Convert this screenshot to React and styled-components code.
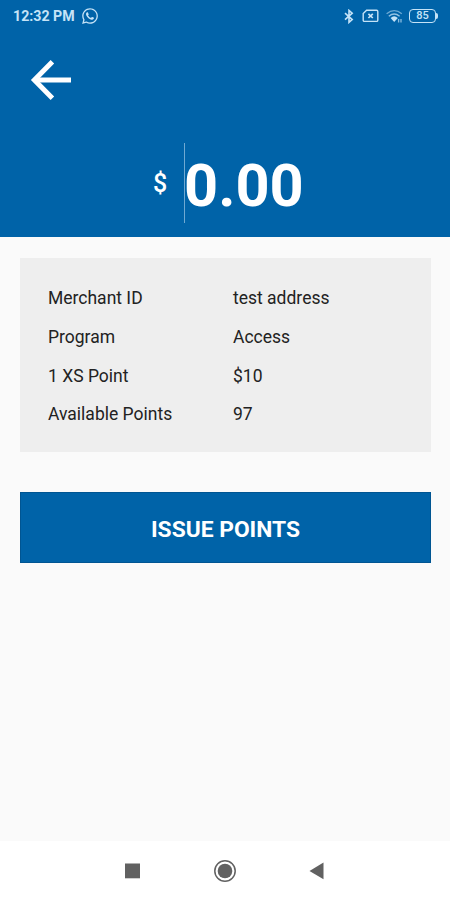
import styled, { createGlobalStyle } from "styled-components"
import { FaWhatsapp } from 'react-icons/fa'

const GlobalStyle = createGlobalStyle`
  * {
    box-sizing: border-box;
  }

  body {
    margin: 0;
    background-color: #fafafa;
    font-family: Roboto, "Liberation Sans", sans-serif;
  }
`

const details = [
  {
    "label": 'Merchant ID',
    "value": 'test address'
  },
  {
    "label": 'Program',
    "value": 'Access'
  },
  {
    "label": '1 XS Point',
    "value": '$10'
  },
  {
    "label": 'Available Points',
    "value": '97'
  }
]

const BluetoothIcon = () => (
  <svg width="10" height="15" viewBox="0 0 10 15" fill="none" stroke="currentColor" strokeWidth="1.6">
    <path d="M1 4.2 L8.2 10.6 L5 13.4 V1.4 L8.2 4.2 L1 10.6" />
  </svg>
)

const NoSimIcon = () => (
  <svg width="17" height="14" viewBox="0 0 17 14" fill="none" stroke="currentColor" strokeWidth="1.4">
    <path d="M4.6 1.2 H14.6 Q15.8 1.2 15.8 2.4 V11.2 Q15.8 12.4 14.6 12.4 H2.4 Q1.2 12.4 1.2 11.2 V4.6 Z" />
    <path d="M6.4 4.8 L10.8 9 M10.8 4.8 L6.4 9" strokeWidth="1.7" />
  </svg>
)

const WifiIcon = () => (
  <svg width="17" height="14" viewBox="0 0 17 14" fill="none" stroke="currentColor">
    <path d="M0.6 4.8 Q8.2 -1.6 15.8 4.8" strokeWidth="1.3" opacity="0.55" />
    <path d="M2.8 7.2 Q8.2 2.6 13.6 7.2" strokeWidth="1.4" opacity="0.75" />
    <path d="M4.6 8.9 Q8.2 5.6 11.8 8.9 L8.2 13 Z" fill="currentColor" stroke="none" />
    <path d="M12.6 10 V13.4 M15 10 V13.4" strokeWidth="1.3" opacity="0.7" />
  </svg>
)

const ArrowIcon = () => (
  <svg width="42" height="42" viewBox="0 0 42 42" fill="none" stroke="currentColor" strokeWidth="5">
    <path d="M41 21 H5" />
    <path d="M22.4 2.8 L4.4 21 L22.4 39.2" />
  </svg>
)

const App = () => {
  return (
    <Screen>
      <GlobalStyle />
      <Header>
        <StatusBar>
          <Clock>12:32 PM</Clock>
          <FaWhatsapp size={18} />
          <StatusIcons>
            <BluetoothIcon />
            <NoSimIcon />
            <WifiIcon />
            <Battery><BatteryLevel>85</BatteryLevel></Battery>
          </StatusIcons>
        </StatusBar>
        <BackButton aria-label="Back"><ArrowIcon /></BackButton>
        <Amount>
          <Currency>$</Currency>
          <AmountValue>0.00</AmountValue>
        </Amount>
      </Header>

      <Content>
        <Card>
          {details.map((item) => {
            return (
              <Row key={item.label}>
                <dt>{item.label}</dt>
                <dd>{item.value}</dd>
              </Row>
            )
          })}
        </Card>
        <IssueButton>ISSUE POINTS</IssueButton>
      </Content>

      <NavBar>
        <NavButton aria-label="Recent apps">
          <svg width="24" height="24"><rect x="4" y="4.5" width="15" height="14.8" fill="#616161" /></svg>
        </NavButton>
        <NavButton aria-label="Home">
          <svg width="24" height="24" fill="none" stroke="#616161">
            <circle cx="12" cy="12" r="10.2" strokeWidth="1.5" />
            <circle cx="12" cy="12" r="7.3" fill="#616161" stroke="none" />
          </svg>
        </NavButton>
        <NavButton aria-label="Back">
          <svg width="24" height="24"><path d="M18.5 3.6 V20.2 L4.5 11.9 Z" fill="#616161" /></svg>
        </NavButton>
      </NavBar>
    </Screen>
  )
}

const Screen = styled.div`
  display: flex;
  flex-direction: column;
  width: 450px;
  height: 900px;
  background-color: #fafafa;
  overflow: hidden;
`

const Header = styled.header`
  display: flex;
  flex-direction: column;
  height: 237px;
  background-color: #0063a8;
  color: #ffffff;
`

const StatusBar = styled.div`
  display: flex;
  align-items: center;
  height: 32px;
  padding: 0 12px 0 13px;
  color: #c5e3f7;
`

const Clock = styled.span`
  width: 68px;
  font-size: 14.2px;
  font-weight: 700;
  white-space: nowrap;
`

const StatusIcons = styled.div`
  display: flex;
  align-items: center;
  gap: 6.5px;
  margin-left: auto;

  svg:first-child {
    margin-right: 2px;
  }
`

const Battery = styled.div`
  display: flex;
  align-items: center;

  &:after {
    content: "";
    width: 2px;
    height: 6px;
    background-color: currentColor;
    border-radius: 0 2px 2px 0;
  }
`

const BatteryLevel = styled.span`
  display: flex;
  justify-content: center;
  align-items: center;
  width: 27px;
  height: 14px;
  border: 1px solid currentColor;
  border-radius: 4px;
  font-size: 11px;
  font-weight: 500;
  line-height: 10px;
`

const BackButton = styled.button`
  display: flex;
  width: 42px;
  height: 42px;
  margin: 27px 0 0 30px;
  padding: 0;
  border: 0;
  background: none;
  color: #ffffff;
`

const Amount = styled.div`
  display: flex;
  align-items: center;
  height: 80px;
  margin-top: 42px;
  padding-left: 153px;
`

const Currency = styled.span`
  width: 31px;
  font-size: 25px;
  font-weight: 500;
`

const AmountValue = styled.span`
  display: flex;
  align-items: center;
  height: 80px;
  border-left: 1px solid #6fa9d2;
  padding-top: 6px;
  font-size: 59.5px;
  font-weight: 700;
  text-indent: -1px;
`

const Content = styled.main`
  display: flex;
  flex-direction: column;
  flex: 1;
  gap: 40px;
  padding: 21px 19px 0 20px;
`

const Card = styled.dl`
  height: 194px;
  margin: 0;
  padding: 21px 28px 19px;
  background-color: #eeeeee;
`

const Row = styled.div`
  display: grid;
  grid-template-columns: 185px 1fr;
  align-items: center;
  height: 38.7px;
  color: #222222;
  font-size: 17.5px;

  dd {
    margin: 0;
  }
`

const IssueButton = styled.button`
  height: 71px;
  padding: 4px 0 0;
  border: 1px solid #005592;
  background-color: #0063a8;
  color: #ffffff;
  font-family: inherit;
  font-size: 22.8px;
  font-weight: 700;
`

const NavBar = styled.nav`
  display: flex;
  justify-content: center;
  align-items: center;
  gap: 68px;
  height: 59px;
  background-color: #ffffff;
`

const NavButton = styled.button`
  display: flex;
  padding: 0;
  border: 0;
  background: none;
`

export default App
